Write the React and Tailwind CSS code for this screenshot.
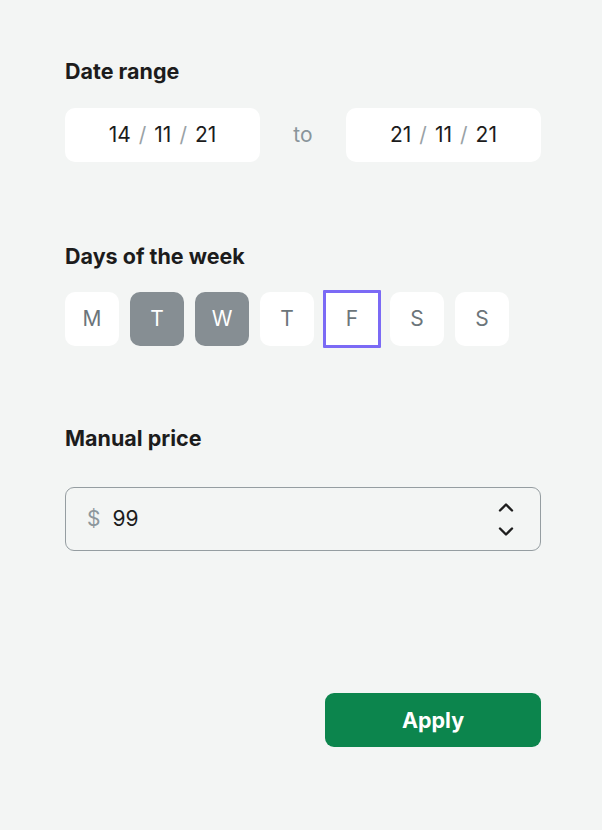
import React from "react";

const font = { fontFamily: "Inter, 'Noto Sans', sans-serif" };

function DateBox({ d, m, y }) {
  return (
    <div className="flex h-[54px] w-[195px] items-center justify-center rounded-[10px] bg-white text-[21px] text-[#1c1c1c]">
      <span>{d}</span>
      <span className="mx-[8px] text-[#9aa2a6]">/</span>
      <span>{m}</span>
      <span className="mx-[8px] text-[#9aa2a6]">/</span>
      <span>{y}</span>
    </div>
  );
}

function Day({ label, selected, focused }) {
  if (focused) {
    return (
      <div className="-m-[2px] flex h-[58px] w-[58px] items-center justify-center rounded-[1px] border-[3px] border-[#7b6af5] bg-white text-[21px] text-[#6c757a]">
        {label}
      </div>
    );
  }
  return (
    <div
      className={
        selected
          ? "flex h-[54px] w-[54px] items-center justify-center rounded-[10px] bg-[#868e93] text-[21px] text-white"
          : "flex h-[54px] w-[54px] items-center justify-center rounded-[10px] bg-white text-[21px] text-[#6c757a]"
      }
    >
      {label}
    </div>
  );
}

export default function App() {
  return (
    <div className="min-h-[830px] w-[602px] bg-[#f3f5f4] pl-[65px] pr-[61px] pt-[57px]" style={font}>
      <h2 className="text-[21.5px] font-bold leading-[28px] text-[#1c1c1c]">Date range</h2>
      <div className="mt-[23px] flex items-center justify-between">
        <DateBox d="14" m="11" y="21" />
        <span className="text-[21px] text-[#8a959b]">to</span>
        <DateBox d="21" m="11" y="21" />
      </div>

      <h2 className="mt-[80px] text-[21.5px] font-bold leading-[28px] text-[#1c1c1c]">Days of the week</h2>
      <div className="mt-[22px] flex gap-[11px]">
        <Day label="M" />
        <Day label="T" selected />
        <Day label="W" selected />
        <Day label="T" />
        <Day label="F" focused />
        <Day label="S" />
        <Day label="S" />
      </div>

      <h2 className="mt-[78px] text-[21.5px] font-bold leading-[28px] text-[#1c1c1c]">Manual price</h2>
      <div className="mt-[35px] flex h-[64px] items-center rounded-[9px] border-[1.5px] border-[#959da1] pl-[21px] pr-[26px]">
        <span className="text-[21px] text-[#8d979c]">$</span>
        <span className="ml-[12px] text-[21px] text-[#1c1c1c]">99</span>
        <div className="ml-auto flex flex-col items-center gap-[15px]">
          <svg width="16" height="10" viewBox="0 0 16 10" fill="none">
            <path d="M2 8.5L8 2.5L14 8.5" stroke="#1e1e1e" strokeWidth="2.4" strokeLinecap="round" strokeLinejoin="round" />
          </svg>
          <svg width="16" height="10" viewBox="0 0 16 10" fill="none">
            <path d="M2 1.5L8 7.5L14 1.5" stroke="#1e1e1e" strokeWidth="2.4" strokeLinecap="round" strokeLinejoin="round" />
          </svg>
        </div>
      </div>

      <div className="mt-[142px] flex justify-end">
        <button className="h-[54px] w-[216px] rounded-[9px] bg-[#0c854d] text-[21.5px] font-bold text-white">
          Apply
        </button>
      </div>
    </div>
  );
}
